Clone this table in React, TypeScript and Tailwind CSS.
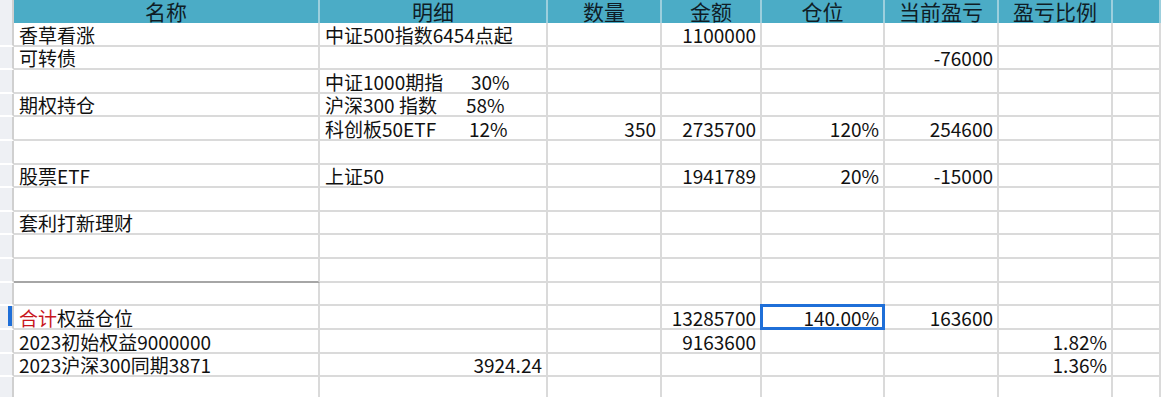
import React from "react";

type Cell = React.ReactNode;

type Row = {
  a?: Cell;
  b?: Cell;
  bRight?: boolean;
  c?: Cell;
  d?: Cell;
  e?: Cell;
  f?: Cell;
  g?: Cell;
  selectE?: boolean;
  active?: boolean;
  thickA?: boolean;
};

const rows: Row[] = [
  { a: "香草看涨", b: "中证500指数6454点起", d: "1100000" },
  { a: "可转债", f: "-76000" },
  {
    b: (
      <>
        <span className="inline-block w-[146px]">中证1000期指</span>30%
      </>
    ),
  },
  {
    a: "期权持仓",
    b: (
      <>
        <span className="inline-block w-[141px]">沪深300 指数</span>58%
      </>
    ),
  },
  {
    b: (
      <>
        <span className="inline-block w-[144px]">科创板50ETF</span>12%
      </>
    ),
    c: "350",
    d: "2735700",
    e: "120%",
    f: "254600",
  },
  {},
  { a: "股票ETF", b: "上证50", d: "1941789", e: "20%", f: "-15000" },
  {},
  { a: "套利打新理财" },
  {},
  { thickA: true },
  {},
  {
    a: (
      <>
        <span className="text-[#c8161d]">合计</span>权益仓位
      </>
    ),
    d: "13285700",
    e: "140.00%",
    f: "163600",
    selectE: true,
    active: true,
  },
  { a: "2023初始权益9000000", d: "9163600", g: "1.82%" },
  { a: "2023沪深300同期3871", b: "3924.24", bRight: true, g: "1.36%" },
  {},
];

const headers = ["名称", "明细", "数量", "金额", "仓位", "当前盈亏", "盈亏比例", ""];

function Left({ children, thick }: { children?: Cell; thick?: boolean }) {
  return (
    <div
      className={
        "flex items-end overflow-visible whitespace-nowrap border-r-2 border-r-[#dadada] pl-[5px] leading-[21px] " +
        (thick ? "border-b-2 border-b-[#a6a6a6]" : "border-b-2 border-b-[#dadada]")
      }
    >
      {children}
    </div>
  );
}

function Right({ children }: { children?: Cell }) {
  return (
    <div className="flex items-end justify-end whitespace-nowrap border-b-2 border-r-2 border-[#dadada] pr-[4px] leading-[21px]">
      {children}
    </div>
  );
}

export default function App() {
  return (
    <div
      className="h-[397px] w-[1161px] overflow-hidden bg-white text-[19px] text-[#111]"
      style={{ fontFamily: '"Noto Sans CJK SC", "Noto Sans", sans-serif' }}
    >
      <div className="grid grid-cols-[14px_306px_228px_114px_100px_123px_114px_114px_1fr] auto-rows-[23.62px] grid-rows-[23px]">
        <div className="border-r-2 border-r-[#d0d0d0] bg-[#eef0f4]" />
        {headers.map((h, i) => (
          <div
            key={i}
            className="flex items-center justify-center border-r-2 border-r-[#9ccfdd] bg-[#4bacc6] text-[21px] leading-[23px] text-[#0f1d26]"
          >
            {h}
          </div>
        ))}

        {rows.map((r, i) => (
          <React.Fragment key={i}>
            <div className="relative border-b-2 border-b-white border-r-2 border-r-[#d0d0d0] bg-[#eef0f4]">
              {r.active && (
                <div className="absolute bottom-[2px] right-0 top-0 w-[4px] bg-[#1f6fd8]" />
              )}
            </div>
            <Left thick={r.thickA}>{r.a}</Left>
            {r.bRight ? <Right>{r.b}</Right> : <Left>{r.b}</Left>}
            <Right>{r.c}</Right>
            <Right>{r.d}</Right>
            <div className="relative flex items-end justify-end whitespace-nowrap border-b-2 border-r-2 border-[#dadada] pr-[4px] leading-[21px]">
              {r.e}
              {r.selectE && (
                <div className="absolute -left-[2px] -top-[2px] bottom-[-2px] right-[-2px] border-[3px] border-[#1f6fd8]" />
              )}
            </div>
            <Right>{r.f}</Right>
            <Right>{r.g}</Right>
            <Right />
          </React.Fragment>
        ))}
      </div>
    </div>
  );
}
